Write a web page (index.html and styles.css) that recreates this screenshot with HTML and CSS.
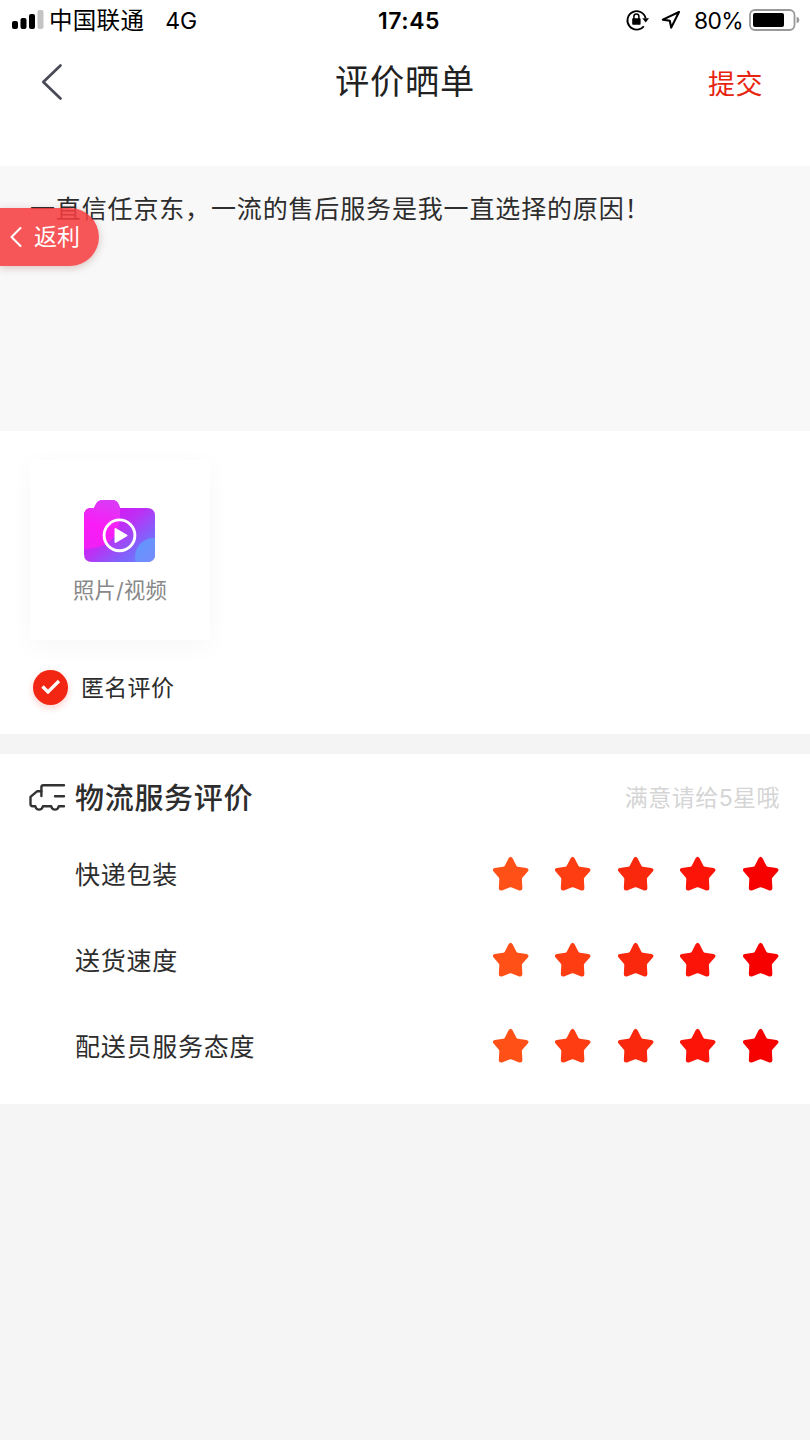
FILE: index.html
```html
<!DOCTYPE html>
<html lang="zh-CN">
<head>
<meta charset="utf-8">
<title>评价晒单</title>
<link rel="stylesheet" href="styles.css">
</head>
<body>
<svg class="defs" width="0" height="0" aria-hidden="true">
  <symbol id="star" viewBox="0 0 36 36"><path d="M15.6 2.2Q17.6-.8 19.6 2.2L23.4 9.7Q23.9 10.5 25 10.7L33.4 11.9Q36.8 12.8 34.8 15.5L29.3 21.7Q28.8 22.4 28.9 23.4L29.4 32.3Q29.3 35.1 26.2 34.5L18.8 31.5Q17.6 31.1 16.4 31.5L9 34.5Q5.9 35.1 5.8 32.3L6.3 23.4Q6.4 22.4 5.9 21.7L.6 15.5Q-1.4 12.8 1.8 11.9L10.2 10.7Q11.3 10.5 11.8 9.7Z" fill="currentColor"/></symbol>
</svg>
<div class="screen">
  <header class="top">
    <div class="status">
      <div class="status-left">
        <svg width="32" height="20" viewBox="0 0 32 20"><rect x="0" y="11" width="6" height="8" rx="2"/><rect x="8.5" y="8" width="6" height="11" rx="2"/><rect x="17" y="4" width="6" height="15" rx="2"/><rect x="25.5" y="0" width="6" height="19" rx="2" fill="#c4c4c4"/></svg>
        <span class="carrier">中国联通</span>
        <span class="network">4G</span>
      </div>
      <div class="time">17:45</div>
      <div class="status-right">
        <svg class="lock" width="24" height="22" viewBox="0 0 24 22"><path d="M17.8 17.2A9.2 9.2 0 1 1 19.6 9.2" fill="none" stroke="#000" stroke-width="1.8"/><path d="M16.3 9.2h6.7l-3.3 4.2z"/><rect x="6.2" y="9.3" width="8.4" height="6.4" rx=".8"/><path d="M7.9 10V7.6a2.5 2.5 0 0 1 5 0V10" fill="none" stroke="#000" stroke-width="1.5"/></svg>
        <svg class="arrow" width="20" height="20" viewBox="0 0 20 20"><path d="M18 2 1.8 9.6 8.8 10.8 10.2 17.6Z" fill="none" stroke="#000" stroke-width="2.1" stroke-linejoin="round"/></svg>
        <span class="percent">80%</span>
        <svg class="battery" width="51" height="22" viewBox="0 0 51 22"><rect x="1" y="1" width="44.5" height="20" rx="5" fill="none" stroke="#999" stroke-width="1.8"/><rect x="4" y="4" width="31" height="14" rx="2"/><path d="M47.6 7.5q2.8 1 2.8 3.5t-2.8 3.5z" fill="#999"/></svg>
      </div>
    </div>
    <nav class="nav">
      <svg class="back" width="22" height="38" viewBox="0 0 22 38"><path d="M19.5 2.5 2.3 19 19.5 35.5" fill="none" stroke="#484a55" stroke-width="2.7" stroke-linecap="round" stroke-linejoin="round"/></svg>
      <h1 class="title">评价晒单</h1>
      <span class="submit">提交</span>
    </nav>
  </header>

  <section class="review">
    <p class="review-text">一直信任京东，一流的售后服务是我一直选择的原因！</p>
    <div class="rebate">
      <svg width="12" height="20" viewBox="0 0 12 20"><path d="M10.5 1 1.5 10l9 9" fill="none" stroke="#fff" stroke-width="2.1" stroke-linecap="round" stroke-linejoin="round"/></svg>
      <span>返利</span>
    </div>
  </section>

  <section class="media">
    <div class="upload">
      <svg class="folder" width="72" height="64" viewBox="0 0 72 64">
        <defs>
          <linearGradient id="body" x1=".15" y1=".2" x2=".9" y2="1"><stop offset="0" stop-color="#e20df6"/><stop offset=".4" stop-color="#bd2ff5"/><stop offset=".75" stop-color="#7d66fb"/><stop offset="1" stop-color="#707cff"/></linearGradient>
          <linearGradient id="glow" x1=".6" y1="0" x2=".4" y2="1"><stop offset="0" stop-color="#d93cf7"/><stop offset=".55" stop-color="#fa1cf6"/><stop offset="1" stop-color="#f020f5"/></linearGradient>
          <linearGradient id="corner" x1="0" y1="0" x2="1" y2="1"><stop offset="0" stop-color="#5e99fb"/><stop offset="1" stop-color="#887fff"/></linearGradient>
          <clipPath id="folder"><path d="M8 9h3l2-4q2-4 7-4h9q5 0 7 5l1 3h27q8 0 8 8v38q0 8-8 8H9q-8 0-8-8V17q0-8 7-8z"/></clipPath>
        </defs>
        <g clip-path="url(#folder)"><path d="M0 0h72v64H0z" fill="url(#body)"/><path d="M0 0H37V20Q34 50 0 50z" fill="url(#glow)"/><circle cx="71" cy="58" r="19" fill="url(#corner)"/></g>
        <circle cx="36.5" cy="36.3" r="15.4" fill="none" stroke="#fff" stroke-width="2.9"/>
        <path d="M32.5 30v13l11-6.5z" fill="#fff" stroke="#fff" stroke-width="2" stroke-linejoin="round"/>
      </svg>
      <span class="upload-label">照片/视频</span>
    </div>
    <div class="anonymous">
      <span class="check"><svg width="20" height="16" viewBox="0 0 20 16"><path d="M1.5 7.5 7 13 18 2" fill="none" stroke="#fff" stroke-width="3.3"/></svg></span>
      <span class="anonymous-label">匿名评价</span>
    </div>
  </section>

  <section class="logistics">
    <div class="logistics-head">
      <svg width="38" height="29" viewBox="0 0 38 29"><g fill="none" stroke="#333" stroke-width="2.4" stroke-linecap="round" stroke-linejoin="round"><path d="M36 2.3H15.4q-2 0-2 2V13"/><path d="M13.4 8.3H9L2.5 13.8V21q0 2.2 2.2 2.2h2.6q.9 3.4 3.8 3.4t3.8-3.4h8.3q.9 3.4 3.8 3.4t3.8-3.4H36M27 13.2h9"/></g></svg>
      <h2 class="heading">物流服务评价</h2>
      <span class="hint">满意请给5星哦</span>
    </div>
    <div class="rating"><span>快递包装</span><div class="stars"><svg class="s1"><use href="#star"/></svg><svg class="s2"><use href="#star"/></svg><svg class="s3"><use href="#star"/></svg><svg class="s4"><use href="#star"/></svg><svg class="s5"><use href="#star"/></svg></div></div>
    <div class="rating"><span>送货速度</span><div class="stars"><svg class="s1"><use href="#star"/></svg><svg class="s2"><use href="#star"/></svg><svg class="s3"><use href="#star"/></svg><svg class="s4"><use href="#star"/></svg><svg class="s5"><use href="#star"/></svg></div></div>
    <div class="rating"><span>配送员服务态度</span><div class="stars"><svg class="s1"><use href="#star"/></svg><svg class="s2"><use href="#star"/></svg><svg class="s3"><use href="#star"/></svg><svg class="s4"><use href="#star"/></svg><svg class="s5"><use href="#star"/></svg></div></div>
  </section>
</div>
</body>
</html>
```
FILE: styles.css
```css
* { box-sizing: border-box; margin: 0; padding: 0; }
body { background: #f5f5f5; color: #2d2d2d; font-family: Inter, "Noto Sans CJK SC", sans-serif; font-weight: 400; white-space: nowrap; }
svg { display: block; flex: none; overflow: visible; }
.defs { position: absolute; }
.screen { height: 1440px; overflow: hidden; }

.top { height: 166px; background: #fff; }
.status { display: grid; grid-template-columns: 1fr auto 1fr; align-items: center; height: 40px; padding: 0 10px 0 12px; color: #000; line-height: 38px; }
.status-left, .status-right { display: flex; align-items: center; }
.status-right { justify-content: flex-end; }
.carrier { margin-left: 5px; padding-top: 2px; font-size: 23.5px; letter-spacing: .3px; }
.network { margin-left: 21px; padding-top: 2px; font-size: 23px; }
.time { padding: 2px 0 0 6px; font-size: 23px; font-weight: 600; letter-spacing: .55px; }
.arrow { margin-left: 11px; }
.percent { margin-left: 13px; padding-top: 2px; font-size: 22.8px; letter-spacing: -.6px; }
.battery { margin-left: 6px; }

.nav { display: grid; grid-template-columns: 1fr auto 1fr; align-items: center; height: 84px; padding: 0 47px 0 41px; }
.title { padding: 0 0 0 6px; color: #222; font-size: 34.2px; font-weight: 400; letter-spacing: .8px; line-height: 84px; }
.submit { justify-self: end; color: #e7240f; font-size: 27px; letter-spacing: .5px; }

.review { position: relative; height: 265px; padding: 22px 30px; background: #f8f8f8; }
.review-text { font-size: 25px; letter-spacing: .85px; line-height: 42px; }
.rebate { position: absolute; left: 0; top: 42px; display: flex; align-items: center; width: 99px; height: 58px; padding-left: 10px; gap: 12px; border-radius: 0 29px 29px 0; background: rgba(246, 62, 64, .87); box-shadow: 0 2px 9px rgba(100, 0, 0, .22); color: #fff; font-size: 23px; line-height: 60px; }

.media { height: 303px; padding: 29px 30px 0; background: #fff; }
.upload { display: flex; flex-direction: column; align-items: center; width: 180px; height: 180px; padding-top: 39px; border-radius: 4px; background: #fff; box-shadow: 0 6px 26px rgba(0, 0, 0, .035); }
.folder { margin-right: 2px; }
.upload-label { margin-top: 10px; color: #888; font-size: 21.3px; letter-spacing: .2px; line-height: 34px; }
.anonymous { display: flex; align-items: center; gap: 13px; height: 36px; margin: 29px 0 0 3px; font-size: 23px; letter-spacing: .3px; }
.anonymous-label { padding-bottom: 2px; }
.check { display: flex; align-items: center; justify-content: center; width: 35px; height: 35px; border-radius: 50%; background: #f22613; box-shadow: 0 3px 7px rgba(242, 38, 19, .22); }

.logistics { height: 370px; border-top: 20px solid #f4f4f4; padding: 10px 30px 0 28px; background: #fff; }
.logistics-head { display: flex; align-items: center; height: 67px; }
.heading { margin-left: 9px; padding-bottom: 4px; font-size: 29px; font-weight: 500; letter-spacing: .7px; }
.hint { margin-left: auto; padding-bottom: 4px; color: #d5d5d5; font-size: 23px; letter-spacing: .45px; }
.rating { display: flex; align-items: center; justify-content: space-between; height: 86px; padding-left: 47px; font-size: 25px; letter-spacing: .75px; }
.rating span { padding-bottom: 3px; }
.stars { display: flex; gap: 26.6px; margin-right: 1px; }
.stars svg { width: 36px; height: 36px; }
.s1 { color: #ff5018; }
.s2 { color: #ff3d13; }
.s3 { color: #fa290d; }
.s4 { color: #fb1407; }
.s5 { color: #f60000; }
```
